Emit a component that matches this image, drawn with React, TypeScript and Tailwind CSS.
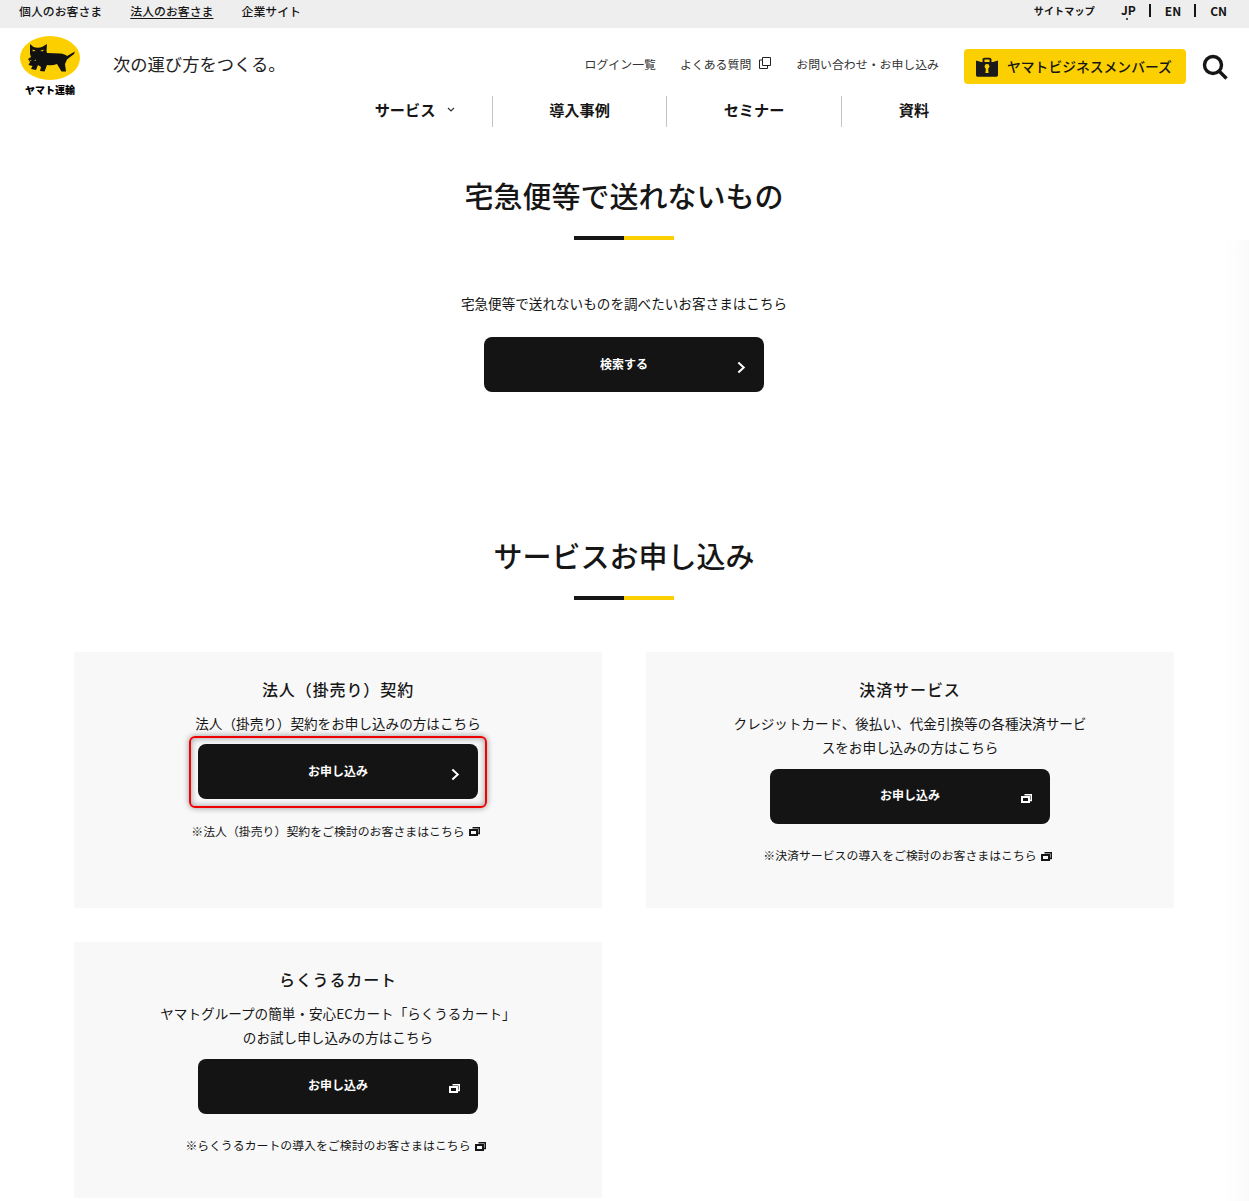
const SANS = "font-['Noto_Sans_CJK_JP','Noto_Sans',sans-serif]"

function BlankIcon({ className }: { className?: string }) {
  return (
    <svg viewBox="0 0 11 9" className={className} fill="none">
      <path d="M3.500.8h6.800v5.700H8.500" stroke="currentColor" strokeWidth="1.500" />
      <rect x="1" y="3" width="7" height="5" stroke="currentColor" strokeWidth="2" />
    </svg>
  )
}

function Chevron() {
  return (
    <svg viewBox="0 0 10 14" className="h-[13px] w-[9px] text-white" fill="none">
      <path d="M1.500 1.500 7.500 7l-6 5.500" stroke="currentColor" strokeWidth="2.200" />
    </svg>
  )
}

function CatLogo() {
  return (
    <svg viewBox="0 0 60 44" className="h-[44px] w-[60px]">
      <ellipse cx="30" cy="22" rx="30" ry="22" fill="#fcd000" />
      <path
        d="M10 8l3.500 3q4.500 1.500 8.500 0l5-3-.5 7 .5 2 13 .5q5 .5 7 2.500l8-4.500-1 2.500-7 5.500-2 4.500 1 7.500h-4.500L37 28q-5 2-10 1l-2.500 6.500L20 35l1-4-3-2-2 5-5-1 1.500-3-4-1 1.500-3-2-3 3-2-1-3z"
        fill="#111"
      />
      <path d="M12.500 13.500l3.500 1.500-3.200.3zM23.500 13.500l-3.500 1.500 3.200.3zM9.800 23.500l2 .9-1.800.4zM16 23.500l-2 .9 1.800.4z" fill="#fcd000" />
    </svg>
  )
}

function BagIcon() {
  return (
    <svg viewBox="0 0 24 20" className="h-[20px] w-[24px]">
      <path d="M1 3.500l5 1.500h1.500V2.500C7.500 1.500 8.500.8 9.500.8h5c1 0 2 .7 2 1.700V5H18l5-1.500V18c0 1-.8 1.800-1.800 1.800H2.800C1.800 19.800 1 19 1 18z" fill="#1a1a1a" />
      <path d="M9.500 2.500h5V5h-5z" fill="#fcd000" />
      <circle cx="12" cy="9.500" r="2.400" fill="#fcd000" />
      <path d="M11 10.500h2l.6 5.500h-3.200z" fill="#fcd000" />
    </svg>
  )
}

function SectionTitle({ title }: { title: string }) {
  return (
    <div className="flex flex-col items-center pr-[1px]">
      <h2 className="text-[29px] leading-[40px] font-medium text-[#161616]">{title}</h2>
      <div className="mt-[21px] flex h-[4px] w-[100px]">
        <span className="w-1/2 bg-[#161616]" />
        <span className="w-1/2 bg-[#fcd000]" />
      </div>
    </div>
  )
}

function DarkButton({ label, blank }: { label: string; blank?: boolean }) {
  return (
    <a className="relative flex h-[55px] w-[280px] items-center justify-center rounded-lg bg-[#141414] text-[12px] font-bold text-white">
      <span className="-mt-[2px]">{label}</span>
      <span className="absolute top-[24px] right-[18px] flex">
        {blank ? <BlankIcon className="mt-[1px] h-[9px] w-[11px] text-white" /> : <Chevron />}
      </span>
    </a>
  )
}

type CardProps = {
  title: string
  lines: string[]
  button: string
  note: string
  blank?: boolean
  marked?: boolean
}

function Card({ title, lines, button, note, blank, marked }: CardProps) {
  return (
    <div className="flex h-[256px] flex-col items-center bg-[#f8f8f8] pt-[23px]">
      <h3 className="text-[16px] leading-[28px] font-medium tracking-[0.9px] text-[#161616]">{title}</h3>
      <div className="mt-[7.800px] text-center text-[13.6px] leading-[24.480px] text-[#161616]">
        {lines.map((l) => (
          <p key={l}>{l}</p>
        ))}
      </div>
      <div className="relative mt-[9px]">
        <DarkButton label={button} blank={blank} />
        {marked && (
          <span className="absolute -top-[8px] -right-[9px] -bottom-[9px] -left-[9px] rounded-[6px] border-2 border-[#f00000] shadow-[0_0_6px_rgba(0,0,0,0.4),inset_0_0_6px_rgba(0,0,0,0.4)]" />
        )}
      </div>
      <p className="mt-[22.700px] mr-[5px] flex items-center gap-[4px] text-[11.9px] leading-[18px] text-[#161616]">
        {note}
        <BlankIcon className="mt-[2px] h-[9px] w-[11px] text-[#161616]" />
      </p>
    </div>
  )
}

export default function App() {
  return (
    <div className={`relative h-[1201px] overflow-hidden bg-white ${SANS}`}>
      {/* Top bar */}
      <div className="flex h-[28px] items-center justify-between bg-[#eeeeee] pr-[22px] pl-[19px] text-[11.9px] font-medium text-[#161616]">
        <div className="-mt-[6px] flex gap-[28px]">
          <a>個人のお客さま</a>
          <a className="underline underline-offset-2">法人のお客さま</a>
          <a>企業サイト</a>
        </div>
        <div className="-mt-[8px] flex items-center font-bold">
          <a className="mr-[26px] text-[10px] tracking-[0.2px]">サイトマップ</a>
          <a className="relative pr-[13px] text-[12px]">
            JP
            <span className="absolute top-[17px] left-[5px] h-[2px] w-[2px] rounded-full bg-[#161616]" />
          </a>
          <a className="border-l-2 border-[#161616] pr-[13px] pl-[14px] text-[12px] leading-[13px]">EN</a>
          <a className="border-l-2 border-[#161616] pl-[14px] text-[12px] leading-[13px]">CN</a>
        </div>
      </div>

      {/* Header */}
      <header className="relative h-[102px]">
        <div className="flex items-start pt-[8px] pl-[20px]">
          <div className="flex w-[60px] flex-col items-center">
            <CatLogo />
            <span className="mt-[3px] text-[10px] leading-[14px] font-black whitespace-nowrap">ヤマト運輸</span>
          </div>
          <p className="mt-[15px] ml-[33px] text-[17.3px] leading-[26px] font-normal text-[#222]">次の運び方をつくる。</p>
          <div className="mt-[13px] ml-auto flex items-center pr-[21px] text-[11.9px] text-[#333]">
            <a className="-mt-[6px]">ログイン一覧</a>
            <a className="-mt-[6px] ml-[24px] flex items-center gap-[8px]">
              よくある質問
              <svg viewBox="0 0 12 12" className="h-[12px] w-[12px]" fill="none" stroke="#222" strokeWidth="1">
                <path d="M3.500.5h8v8h-8zM3.500 3H.5v8.500h8V8.500" />
              </svg>
            </a>
            <a className="-mt-[6px] ml-[25px]">お問い合わせ・お申し込み</a>
            <a className="ml-[25px] flex h-[35px] w-[222px] items-center gap-[8px] rounded-[4px] bg-[#fcd000] pl-[11px] text-[13.8px] font-medium text-[#161616]">
              <BagIcon />
              ヤマトビジネスメンバーズ
            </a>
            <svg viewBox="0 0 26 26" className="ml-[16px] h-[26px] w-[26px]" fill="none" stroke="#161616" strokeWidth="3.400">
              <circle cx="11" cy="11" r="8.500" />
              <path d="M17 17l7.500 7.500" />
            </svg>
          </div>
        </div>
        <nav className="absolute top-[68px] left-[318px] flex h-[31px] text-[15.2px] font-bold text-[#161616]">
          <a className="flex w-[175px] items-center justify-center gap-[12px] border-r border-[#c4c4c4] pb-[4px] pl-[20px]">
            サービス
            <svg viewBox="0 0 8 6" className="h-[6px] w-[8px]" fill="none" stroke="#333" strokeWidth="1.200">
              <path d="M1 1l3 3 3-3" />
            </svg>
          </a>
          <a className="flex w-[174px] items-center justify-center border-r border-[#c4c4c4] pb-[4px]">導入事例</a>
          <a className="flex w-[175px] items-center justify-center border-r border-[#c4c4c4] pb-[4px]">セミナー</a>
          <a className="flex w-[144px] items-center justify-center pb-[4px]">資料</a>
        </nav>
      </header>

      <main>
        <section className="pt-[45px]">
          <SectionTitle title="宅急便等で送れないもの" />
          <p className="mt-[53px] pr-[1px] text-center text-[13.6px] leading-[20px] text-[#161616]">
            宅急便等で送れないものを調べたいお客さまはこちら
          </p>
          <div className="mt-[24px] flex justify-center pr-[1px]">
            <DarkButton label="検索する" />
          </div>
        </section>

        <section className="mt-[143px]">
          <SectionTitle title="サービスお申し込み" />
          <div className="mx-[74px] mt-[52px] grid w-[1100px] grid-cols-2 gap-x-[44px] gap-y-[34px]">
            <Card
              title="法人（掛売り）契約"
              lines={['法人（掛売り）契約をお申し込みの方はこちら']}
              button="お申し込み"
              note="※法人（掛売り）契約をご検討のお客さまはこちら"
              marked
            />
            <Card
              title="決済サービス"
              lines={['クレジットカード、後払い、代金引換等の各種決済サービ', 'スをお申し込みの方はこちら']}
              button="お申し込み"
              note="※決済サービスの導入をご検討のお客さまはこちら"
              blank
            />
            <Card
              title="らくうるカート"
              lines={['ヤマトグループの簡単・安心ECカート「らくうるカート」', 'のお試し申し込みの方はこちら']}
              button="お申し込み"
              note="※らくうるカートの導入をご検討のお客さまはこちら"
              blank
            />
          </div>
        </section>
      </main>

      {/* faint fade along the right edge */}
      <div className="pointer-events-none absolute top-[240px] right-0 bottom-0 w-[24px] bg-gradient-to-r from-transparent to-[#fafafa]" />
    </div>
  )
}
